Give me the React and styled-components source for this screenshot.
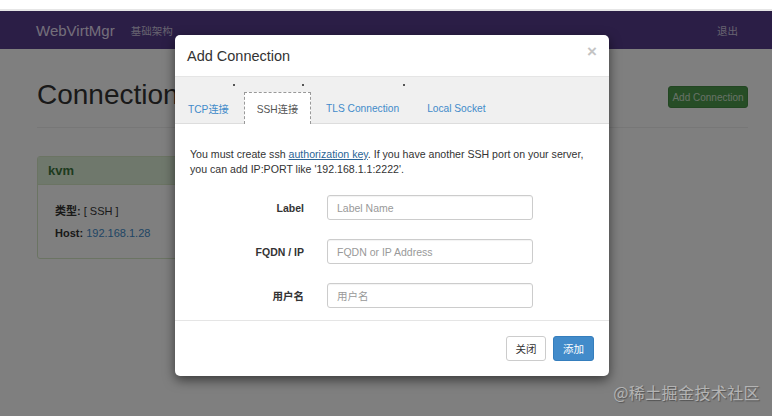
import React from "react";
import styled, { createGlobalStyle } from "styled-components";

const Global = createGlobalStyle`
  html, body { margin: 0; padding: 0; background: #fff; }
  body { font-family: "Liberation Sans", Arial, "Noto Sans CJK SC", sans-serif; width: 772px; height: 416px; overflow: hidden; }
  * { box-sizing: border-box; }
`;

const TopStrip = styled.div`
  height: 11px;
  background: #fff;
  border-bottom: 2px solid #e6e6e6;
`;

const Page = styled.div`
  position: relative;
  height: 405px;
  background: #fff;
  overflow: hidden;
`;

const Navbar = styled.nav`
  height: 38px;
  background: #563c8c;
  display: flex;
  align-items: center;
  padding: 0 34px 0 36px;
`;

const Brand = styled.span`
  font-size: 15px;
  color: #e6def5;
  margin-right: 16px;
`;

const NavLink = styled.span`
  font-size: 10.5px;
  color: #cdc5df;
  font-family: "Noto Sans CJK SC", sans-serif;
  margin-left: ${(p) => (p.$right ? "auto" : "0")};
`;

const Content = styled.div`
  padding: 20px 24px 0 37px;
`;

const HeadRow = styled.div`
  display: flex;
  align-items: center;
  justify-content: space-between;
  height: 52px;
  border-bottom: 1px solid #eee;
  padding-bottom: 6px;
  box-sizing: content-box;
`;

const Title = styled.h1`
  margin: 0;
  font-weight: 400;
  font-size: 28px;
  color: #333;
`;

const SuccessButton = styled.button`
  font-family: "Liberation Sans", Arial, sans-serif;
  font-size: 10px;
  color: #d0e2d0;
  background: #4c9a4c;
  border: 1px solid #448d44;
  border-radius: 3px;
  height: 22px;
  width: 80px;
  padding: 0;
  margin-top: 4px;
`;

const Panel = styled.div`
  margin-top: 28px;
  width: 260px;
  border: 1px solid #d6e9c6;
  border-radius: 3px;
  background: #fff;
`;

const PanelHeading = styled.div`
  height: 28px;
  background: #dff0d8;
  color: #3c763d;
  font-weight: 700;
  font-size: 13px;
  display: flex;
  align-items: center;
  padding-left: 10px;
  border-bottom: 1px solid #d6e9c6;
`;

const PanelBody = styled.div`
  padding: 19px 17px 18px;
  display: flex;
  flex-direction: column;
  gap: 8px;
  font-size: 11px;
  color: #333;
  line-height: 14px;
`;

const Strong = styled.b`
  font-family: "Liberation Sans", "Noto Sans CJK SC", sans-serif;
`;

const Link = styled.span`
  color: #428bca;
`;

const Backdrop = styled.div`
  position: absolute;
  inset: 0;
  background: rgba(0, 0, 0, 0.5);
`;

const Modal = styled.div`
  position: absolute;
  left: 175px;
  top: 24px;
  width: 434px;
  background: #fff;
  border-radius: 5px;
  box-shadow: 0 4px 12px rgba(0, 0, 0, 0.55);
  overflow: hidden;
`;

const ModalHeader = styled.div`
  height: 42px;
  display: flex;
  align-items: center;
  justify-content: space-between;
  padding: 0 12px 0 12px;
  border-bottom: 1px solid #e5e5e5;
`;

const ModalTitle = styled.span`
  font-size: 14.5px;
  color: #333;
`;

const Close = styled.span`
  font-size: 17px;
  font-weight: 700;
  color: #c4c4c4;
  margin-top: -8px;
  margin-right: 0;
`;

const TabBar = styled.div`
  height: 47px;
  background: #f0f0f0;
  border-bottom: 1px solid #ddd;
  display: flex;
  align-items: flex-end;
  gap: 2px;
`;

const Tab = styled.div`
  position: relative;
  height: 32px;
  padding: 0 12px;
  display: flex;
  align-items: center;
  font-size: 10.2px;
  font-family: "Liberation Sans", Arial, "Noto Sans CJK SC", sans-serif;
  color: ${(p) => (p.$active ? "#555" : "#428bca")};
  background: ${(p) => (p.$active ? "#fff" : "transparent")};
  border: 1px dashed ${(p) => (p.$active ? "#999" : "transparent")};
  border-bottom: none;
  margin-bottom: -1px;
  &::after {
    content: "";
    display: ${(p) => (p.$dot ? "block" : "none")};
    position: absolute;
    right: 6px;
    top: -9px;
    width: 2px;
    height: 2px;
    border-radius: 1px;
    background: #222;
  }
`;

const ModalBody = styled.div`
  padding: 23px 15px 12px;
`;

const Intro = styled.p`
  margin: 0 0 18px;
  font-size: 10.6px;
  line-height: 15px;
  color: #333;
`;

const KeyLink = styled.a`
  color: #2a6496;
  text-decoration: underline;
`;

const Form = styled.div`
  display: flex;
  flex-direction: column;
  gap: 19px;
`;

const FormRow = styled.div`
  display: flex;
  align-items: center;
  gap: 23px;
`;

const Label = styled.label`
  width: 114px;
  text-align: right;
  font-weight: 700;
  font-size: 10.5px;
  color: #333;
  font-family: "Liberation Sans", Arial, "Noto Sans CJK SC", sans-serif;
`;

const Input = styled.input`
  width: 206px;
  height: 25px;
  border: 1px solid #ccc;
  border-radius: 3px;
  padding: 0 9px;
  font-size: 10.5px;
  font-family: "Liberation Sans", Arial, "Noto Sans CJK SC", sans-serif;
  color: #555;
  box-shadow: inset 0 1px 1px rgba(0, 0, 0, 0.05);
  &::placeholder { color: #999; }
`;

const ModalFooter = styled.div`
  border-top: 1px solid #e5e5e5;
  padding: 15px 15px 15px;
  display: flex;
  justify-content: flex-end;
  gap: 7px;
`;

const Btn = styled.button`
  height: 25px;
  width: ${(p) => (p.$primary ? "41px" : "40px")};
  padding: 0;
  border-radius: 3px;
  font-size: 10.5px;
  font-family: "Noto Sans CJK SC", sans-serif;
  color: ${(p) => (p.$primary ? "#fff" : "#333")};
  background: ${(p) => (p.$primary ? "#428bca" : "#fff")};
  border: 1px solid ${(p) => (p.$primary ? "#357ebd" : "#ccc")};
`;

const Watermark = styled.div`
  position: absolute;
  right: 12px;
  bottom: 12px;
  font-family: "Noto Sans CJK SC", sans-serif;
  font-size: 16px;
  color: #b4b4b4;
  text-shadow: 1px 1px 1px rgba(0, 0, 0, 0.35);
  letter-spacing: 0.4px;
`;

export default function App() {
  return (
    <>
      <Global />
      <TopStrip />
      <Page>
        <Navbar>
          <Brand>WebVirtMgr</Brand>
          <NavLink>基础架构</NavLink>
          <NavLink $right>退出</NavLink>
        </Navbar>
        <Content>
          <HeadRow>
            <Title>Connections</Title>
            <SuccessButton>Add Connection</SuccessButton>
          </HeadRow>
          <Panel>
            <PanelHeading>kvm</PanelHeading>
            <PanelBody>
              <div>
                <Strong>类型:</Strong> [ SSH ]
              </div>
              <div>
                <Strong>Host:</Strong> <Link>192.168.1.28</Link>
              </div>
            </PanelBody>
          </Panel>
        </Content>
        <Backdrop />
        <Modal>
          <ModalHeader>
            <ModalTitle>Add Connection</ModalTitle>
            <Close>×</Close>
          </ModalHeader>
          <TabBar>
            <Tab $dot>TCP连接</Tab>
            <Tab $active $dot>SSH连接</Tab>
            <Tab $dot>TLS Connection</Tab>
            <Tab>Local Socket</Tab>
          </TabBar>
          <ModalBody>
            <Intro>
              You must create ssh <KeyLink>authorization key</KeyLink>. If you have another SSH port on your server,
              you can add IP:PORT like '192.168.1.1:2222'.
            </Intro>
            <Form>
              <FormRow>
                <Label>Label</Label>
                <Input placeholder="Label Name" />
              </FormRow>
              <FormRow>
                <Label>FQDN / IP</Label>
                <Input placeholder="FQDN or IP Address" />
              </FormRow>
              <FormRow>
                <Label>用户名</Label>
                <Input placeholder="用户名" />
              </FormRow>
            </Form>
          </ModalBody>
          <ModalFooter>
            <Btn>关闭</Btn>
            <Btn $primary>添加</Btn>
          </ModalFooter>
        </Modal>
        <Watermark>@稀土掘金技术社区</Watermark>
      </Page>
    </>
  );
}
